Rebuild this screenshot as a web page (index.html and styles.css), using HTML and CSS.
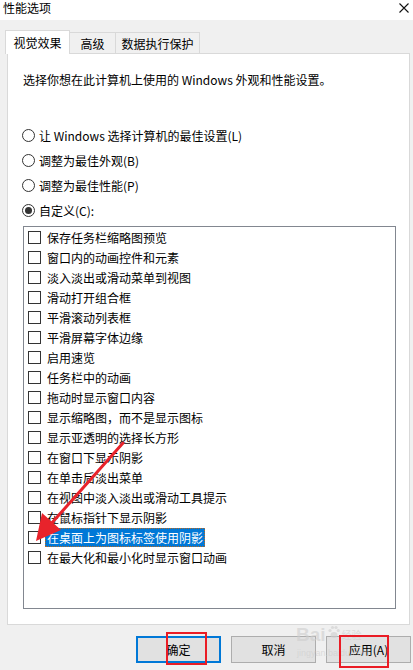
FILE: index.html
```html
<!DOCTYPE html>
<html lang="zh-CN">
<head>
<meta charset="utf-8">
<title>性能选项</title>
<link rel="stylesheet" href="styles.css">
</head>
<body>
<div class="window">
  <div class="titlebar">
    <span class="title">性能选项</span>
    <svg class="close" width="10" height="10" viewBox="0 0 10 10"><path d="M0.5 0.5L9.5 9.5M9.5 0.5L0.5 9.5" stroke="#111" stroke-width="1.1" fill="none"/></svg>
  </div>
  <div class="tabs">
    <div class="tab tab-active">视觉效果</div>
    <div class="tab tab-adv">高级</div>
    <div class="tab tab-dep">数据执行保护</div>
  </div>
  <div class="panel">
    <p class="desc">选择你想在此计算机上使用的 Windows 外观和性能设置。</p>
    <div class="radios">
      <div class="radio-row"><span class="radio"></span><span>让 Windows 选择计算机的最佳设置(L)</span></div>
      <div class="radio-row"><span class="radio"></span><span>调整为最佳外观(B)</span></div>
      <div class="radio-row"><span class="radio"></span><span>调整为最佳性能(P)</span></div>
      <div class="radio-row"><span class="radio radio-on"></span><span>自定义(C):</span></div>
    </div>
    <div class="list">
      <div class="item"><span class="check"></span><span class="label">保存任务栏缩略图预览</span></div>
      <div class="item"><span class="check"></span><span class="label">窗口内的动画控件和元素</span></div>
      <div class="item"><span class="check"></span><span class="label">淡入淡出或滑动菜单到视图</span></div>
      <div class="item"><span class="check"></span><span class="label">滑动打开组合框</span></div>
      <div class="item"><span class="check"></span><span class="label">平滑滚动列表框</span></div>
      <div class="item"><span class="check"></span><span class="label">平滑屏幕字体边缘</span></div>
      <div class="item"><span class="check"></span><span class="label">启用速览</span></div>
      <div class="item"><span class="check"></span><span class="label">任务栏中的动画</span></div>
      <div class="item"><span class="check"></span><span class="label">拖动时显示窗口内容</span></div>
      <div class="item"><span class="check"></span><span class="label">显示缩略图，而不是显示图标</span></div>
      <div class="item"><span class="check"></span><span class="label">显示亚透明的选择长方形</span></div>
      <div class="item"><span class="check"></span><span class="label">在窗口下显示阴影</span></div>
      <div class="item"><span class="check"></span><span class="label">在单击后淡出菜单</span></div>
      <div class="item"><span class="check"></span><span class="label">在视图中淡入淡出或滑动工具提示</span></div>
      <div class="item"><span class="check"></span><span class="label">在鼠标指针下显示阴影</span></div>
      <div class="item"><span class="check"></span><span class="label label-selected">在桌面上为图标标签使用阴影</span></div>
      <div class="item"><span class="check"></span><span class="label">在最大化和最小化时显示窗口动画</span></div>
    </div>
  </div>
  <div class="buttons">
    <button class="btn btn-default">确定</button>
    <button class="btn">取消</button>
    <button class="btn">应用(A)</button>
  </div>
</div>
<div class="watermark">
  <div class="wm-top">
    <span class="wm-logo">Bai</span>
    <svg class="wm-paw" width="14" height="14" viewBox="0 0 14 14"><g fill="rgba(205,205,205,0.6)"><ellipse cx="7" cy="10" rx="3.5" ry="3"/><circle cx="3" cy="5.5" r="1.6"/><circle cx="5.5" cy="2.5" r="1.6"/><circle cx="9" cy="2.5" r="1.6"/><circle cx="11.3" cy="5.5" r="1.6"/></g></svg>
    <span class="wm-jy">经验</span>
  </div>
  <span class="wm-url">jingyan.baidu.com</span>
</div>
<svg class="annot" width="413" height="670" viewBox="0 0 413 670">
  <line x1="123" y1="443" x2="50" y2="525" stroke="#e8232b" stroke-width="3" stroke-linecap="round"/>
  <polygon points="36,541 42,513 61,530" fill="#e8232b"/>
  <rect x="167" y="633" width="39" height="31" fill="none" stroke="#ea1c25" stroke-width="2"/>
  <rect x="340" y="636" width="48" height="31" fill="none" stroke="#ea1c25" stroke-width="2"/>
</svg>
</body>
</html>
```
FILE: styles.css
```css
* { box-sizing: border-box; }
html, body {
  margin: 0;
  padding: 0;
}
body {
  width: 413px;
  height: 670px;
  overflow: hidden;
  background: #f0f0f0;
  font-family: "Noto Sans CJK SC", "Noto Sans", sans-serif;
  font-size: 12px;
  color: #000;
  position: relative;
}
.window {
  display: flex;
  flex-direction: column;
  height: 670px;
}
.titlebar {
  height: 20px;
  background: #fff;
  display: flex;
  justify-content: space-between;
  align-items: flex-start;
  padding: 0 4px 0 3px;
}
.title {
  line-height: 16px;
}
.close {
  margin-top: 3px;
}
.tabs {
  height: 33px;
  display: flex;
  align-items: flex-end;
  padding-left: 5px;
  position: relative;
  z-index: 1;
}
.tab {
  display: flex;
  align-items: center;
  justify-content: center;
  border-top: 1px solid #d9d9d9;
  border-right: 1px solid #d9d9d9;
  height: 21px;
  background: #f0f0f0;
}
.tab-active {
  width: 65px;
  height: 24px;
  background: #fff;
  border-left: 1px solid #d9d9d9;
  margin-bottom: -1px;
  padding-bottom: 1px;
}
.tab-adv {
  width: 46px;
}
.tab-dep {
  width: 84px;
}
.panel {
  margin: 0 3px 0 7px;
  height: 572px;
  border: 1px solid #d9d9d9;
  background: #fff;
  padding: 18px 13px 0 15px;
}
.desc {
  margin: 0;
  line-height: 16px;
}
.radios {
  margin-top: 35px;
  margin-left: -1px;
}
.radio-row {
  height: 25px;
  display: flex;
  align-items: center;
  gap: 4px;
}
.radio {
  width: 13px;
  height: 13px;
  border: 1px solid #333;
  border-radius: 50%;
  display: flex;
  align-items: center;
  justify-content: center;
  flex: none;
}
.radio-on::after {
  content: "";
  width: 7px;
  height: 7px;
  border-radius: 50%;
  background: #333;
}
.list {
  margin-top: 3px;
  width: 373px;
  height: 383px;
  border: 1px solid #828790;
  background: #fff;
  padding: 0 4px;
}
.item {
  height: 20px;
  display: flex;
  align-items: center;
}
.check {
  width: 13px;
  height: 13px;
  border: 1px solid #333;
  flex: none;
  background: #fff;
}
.label {
  margin-left: 4px;
  padding: 0 2px;
  line-height: 19px;
  height: 19px;
  margin-top: 1px;
}
.label-selected {
  background: #0078d7;
  color: #fff;
  outline: 1px dotted #b96a22;
  outline-offset: -1px;
}
.buttons {
  margin-top: 11px;
  display: flex;
  justify-content: flex-end;
  gap: 10px;
  padding-right: 2px;
}
.btn {
  width: 85px;
  height: 27px;
  background: #e1e1e1;
  border: 1px solid #adadad;
  font-family: inherit;
  font-size: 12px;
  color: #000;
  padding: 0;
}
.btn-default {
  border: 2px solid #0078d7;
}
.watermark {
  position: absolute;
  left: 296px;
  top: 624px;
  display: flex;
  flex-direction: column;
  color: rgba(205, 205, 205, 0.6);
  pointer-events: none;
}
.wm-top {
  display: flex;
  align-items: flex-start;
  gap: 1px;
}
.wm-logo {
  font-family: "Liberation Sans", sans-serif;
  font-weight: bold;
  font-size: 19px;
  line-height: 22px;
}
.wm-paw {
  margin-top: 1px;
}
.wm-jy {
  font-size: 10px;
  line-height: 14px;
  margin-top: 4px;
}
.wm-url {
  font-family: "Liberation Sans", sans-serif;
  font-size: 9px;
  line-height: 11px;
  margin-top: 2px;
  margin-left: 1px;
}
.annot {
  position: absolute;
  left: 0;
  top: 0;
  pointer-events: none;
}
```
